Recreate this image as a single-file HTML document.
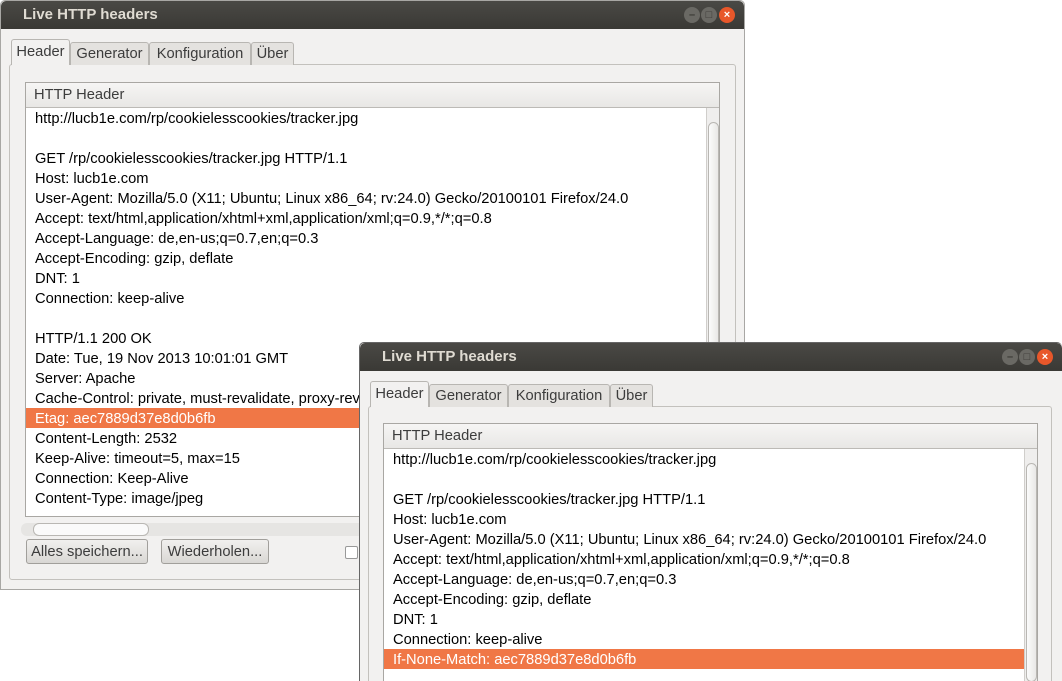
<!DOCTYPE html>
<html><head><meta charset="utf-8"><style>
html,body{margin:0;width:1062px;height:681px;overflow:hidden;}
body{background:#fff;position:relative;font-family:"Liberation Sans","DejaVu Sans",sans-serif;}
.win{position:absolute;background:#f2f1f0;border:1px solid #a8a7a4;box-sizing:border-box;overflow:hidden;}
.title{position:absolute;left:0;top:0;right:0;height:28px;background:linear-gradient(#4a4945,#3a3935);border-radius:5px 5px 0 0;color:#dfdbd2;font-weight:bold;font-size:15px;line-height:28px;padding-left:22px;}
.b{position:absolute;top:6px;width:16px;height:16px;border-radius:50%;background:#6a6964;color:#3a3935;font-size:11px;text-align:center;line-height:16px;font-weight:bold;}
.b.x{background:#e8572a;color:#fff;}
.tabs{position:absolute;top:38px;left:10px;height:26px;}
.tab{position:absolute;top:3px;height:23px;border:1px solid #b8b6b2;border-bottom:none;background:#e4e2df;font-size:14.7px;color:#3c3c3c;line-height:22px;text-align:center;border-radius:3px 3px 0 0;box-sizing:border-box;}
.tab.a{top:0;height:26px;background:#f2f1f0;line-height:25px;}
.frame{position:absolute;border:1px solid #c3c1bd;border-radius:3px;box-sizing:border-box;}
.list{position:absolute;background:#fff;border:1px solid #a9a7a3;box-sizing:border-box;overflow:hidden;}
.hdr{height:24px;background:linear-gradient(#f6f5f4,#e8e7e5);border-bottom:1px solid #bcbab6;font-size:14.7px;color:#3c3c3c;line-height:24px;padding-left:8px;}
.lines{position:absolute;left:0;top:25px;font-size:14.7px;color:#000;}
.lines div{height:20px;line-height:22px;padding-left:9px;white-space:nowrap;}
.lines .hl{background:#f07746;color:#fff;}
.vs{position:absolute;top:25px;bottom:0;width:13px;background:#efeeed;border-left:1px solid #d0cecb;}
.thumb{position:absolute;left:1px;right:1px;border:1px solid #b9b7b3;border-radius:6px;background:linear-gradient(90deg,#fbfbfb,#e9e8e6);}
.btn{position:absolute;height:25px;border:1px solid #a19f9b;border-radius:3px;background:linear-gradient(#f1f0ee,#d9d7d4);font-size:14.7px;color:#3c3c3c;line-height:24px;text-align:center;box-sizing:border-box;white-space:nowrap;}
</style></head><body>

<div class="win" style="left:0;top:0;width:745px;height:590px;border-radius:5px 5px 0 0;">
 <div class="title">Live HTTP headers</div>
 <div class="b" style="left:683px;">–</div><div class="b" style="left:700px;">□</div><div class="b x" style="left:718px;">×</div>
 <div class="frame" style="left:8px;top:63px;width:727px;height:516px;"></div>
 <div class="tabs">
  <div class="tab a" style="left:0;width:59px;">Header</div>
  <div class="tab" style="left:59px;width:79px;">Generator</div>
  <div class="tab" style="left:138px;width:102px;">Konfiguration</div>
  <div class="tab" style="left:240px;width:43px;">Über</div>
 </div>
 <div class="list" style="left:24px;top:81px;width:695px;height:435px;">
  <div class="hdr">HTTP Header</div>
  <div class="lines" style="width:680px;">
   <div>http://lucb1e.com/rp/cookielesscookies/tracker.jpg</div><div></div>
   <div>GET /rp/cookielesscookies/tracker.jpg HTTP/1.1</div>
   <div>Host: lucb1e.com</div>
   <div>User-Agent: Mozilla/5.0 (X11; Ubuntu; Linux x86_64; rv:24.0) Gecko/20100101 Firefox/24.0</div>
   <div>Accept: text/html,application/xhtml+xml,application/xml;q=0.9,*/*;q=0.8</div>
   <div>Accept-Language: de,en-us;q=0.7,en;q=0.3</div>
   <div>Accept-Encoding: gzip, deflate</div>
   <div>DNT: 1</div>
   <div>Connection: keep-alive</div><div></div>
   <div>HTTP/1.1 200 OK</div>
   <div>Date: Tue, 19 Nov 2013 10:01:01 GMT</div>
   <div>Server: Apache</div>
   <div>Cache-Control: private, must-revalidate, proxy-revalidate</div>
   <div class="hl">Etag: aec7889d37e8d0b6fb</div>
   <div>Content-Length: 2532</div>
   <div>Keep-Alive: timeout=5, max=15</div>
   <div>Connection: Keep-Alive</div>
   <div>Content-Type: image/jpeg</div>
  </div>
  <div class="vs" style="left:680px;"><div class="thumb" style="top:14px;bottom:0;"></div></div>
 </div>
 <div style="position:absolute;left:20px;top:522px;width:700px;height:13px;background:#e6e5e3;border-radius:6px;"><div style="position:absolute;left:12px;top:0;width:114px;height:11px;border:1px solid #b9b7b3;border-radius:6px;background:#fafafa;"></div></div>
 <div class="btn" style="left:25px;top:538px;width:122px;">Alles speichern...</div>
 <div class="btn" style="left:160px;top:538px;width:108px;">Wiederholen...</div>
 <div style="position:absolute;left:344px;top:545px;width:11px;height:11px;border:1px solid #999;border-radius:2px;background:#fff;"></div>
</div>

<div class="win" style="left:359px;top:342px;width:703px;height:339px;border-radius:5px 5px 0 0;border-color:#666;border-bottom:none;border-right:none;">
 <div class="title">Live HTTP headers</div>
 <div class="b" style="left:642px;">–</div><div class="b" style="left:659px;">□</div><div class="b x" style="left:677px;">×</div>
 <div class="frame" style="left:8px;top:63px;width:684px;height:276px;border-bottom:none;border-radius:3px 3px 0 0;"></div>
 <div class="tabs">
  <div class="tab a" style="left:0;width:59px;">Header</div>
  <div class="tab" style="left:59px;width:79px;">Generator</div>
  <div class="tab" style="left:138px;width:102px;">Konfiguration</div>
  <div class="tab" style="left:240px;width:43px;">Über</div>
 </div>
 <div class="list" style="left:23px;top:80px;width:655px;height:259px;border-bottom:none;">
  <div class="hdr">HTTP Header</div>
  <div class="lines" style="width:640px;">
   <div>http://lucb1e.com/rp/cookielesscookies/tracker.jpg</div><div></div>
   <div>GET /rp/cookielesscookies/tracker.jpg HTTP/1.1</div>
   <div>Host: lucb1e.com</div>
   <div>User-Agent: Mozilla/5.0 (X11; Ubuntu; Linux x86_64; rv:24.0) Gecko/20100101 Firefox/24.0</div>
   <div>Accept: text/html,application/xhtml+xml,application/xml;q=0.9,*/*;q=0.8</div>
   <div>Accept-Language: de,en-us;q=0.7,en;q=0.3</div>
   <div>Accept-Encoding: gzip, deflate</div>
   <div>DNT: 1</div>
   <div>Connection: keep-alive</div>
   <div class="hl">If-None-Match: aec7889d37e8d0b6fb</div>
  </div>
  <div class="vs" style="left:640px;"><div class="thumb" style="top:14px;bottom:0;"></div></div>
 </div>
</div>
</body></html>
